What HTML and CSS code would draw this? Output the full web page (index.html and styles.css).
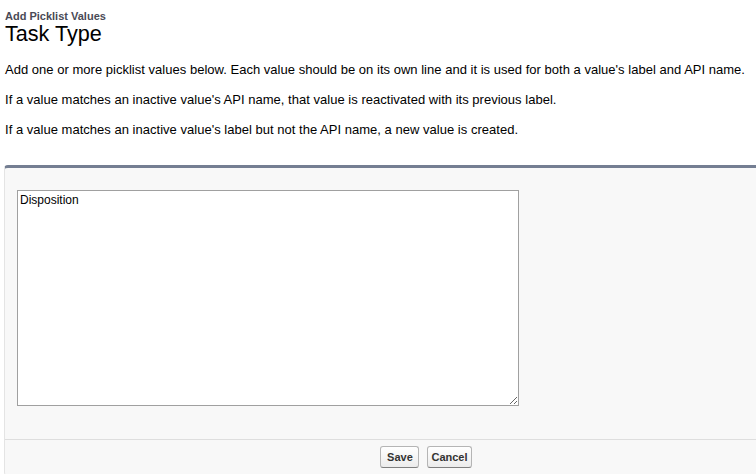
FILE: index.html
```html
<!DOCTYPE html>
<html>
<head>
<meta charset="utf-8">
<link rel="stylesheet" href="styles.css">
</head>
<body>
<div class="page">
  <div class="header">
    <div class="eyebrow">Add Picklist Values</div>
    <h1 class="title">Task Type</h1>
  </div>
  <div class="intro">
    <p>Add one or more picklist values below. Each value should be on its own line and it is used for both a value's label and API name.</p>
    <p>If a value matches an inactive value's API name, that value is reactivated with its previous label.</p>
    <p>If a value matches an inactive value's label but not the API name, a new value is created.</p>
  </div>
  <div class="panel-clip">
    <div class="panel">
      <div class="panel-body">
        <textarea class="values">Disposition</textarea>
      </div>
      <div class="panel-footer">
        <button class="btn">Save</button>
        <button class="btn">Cancel</button>
      </div>
    </div>
  </div>
</div>
</body>
</html>
```

FILE: styles.css
```css
html, body {
  margin: 0;
  padding: 0;
  overflow: hidden;
  background: #ffffff;
}
body {
  font-family: "Liberation Sans", Arial, sans-serif;
  color: #000;
}
.page {
  padding: 0 0 0 4px;
}
.header {
  padding: 10px 0 0 1px;
}
.eyebrow {
  font-size: 11px;
  font-weight: bold;
  color: #4a4a56;
  line-height: 13px;
}
.title {
  margin: 0;
  font-size: 21.6px;
  font-weight: normal;
  line-height: 22px;
  color: #000;
}
.intro {
  padding: 17px 0 0 1px;
}
.intro p {
  margin: 0 0 15px 0;
  font-size: 13px;
  line-height: 15px;
  letter-spacing: 0.02px;
}
.panel-clip {
  overflow: hidden;
  margin-top: 28px;
}
.panel {
  width: 842px;
  background: #f8f8f8;
  border-top: 3px solid #747e92;
  border-left: 1px solid #e4e4e4;
  border-radius: 4px 0 0 4px;
}
.panel-body {
  padding: 22px 0 0 12px;
  height: 272px;
  box-sizing: border-box;
  border-bottom: 1px solid #dedede;
}
.values {
  display: block;
  width: 502px;
  height: 216px;
  box-sizing: border-box;
  margin: 0;
  padding: 2px 2px;
  border: 1px solid #a0a0a0;
  font-family: "Liberation Sans", Arial, sans-serif;
  font-size: 12px;
  line-height: 14px;
  color: #000;
  background: #fff;
  resize: both;
}
.panel-footer {
  display: flex;
  justify-content: center;
  gap: 8px;
  padding: 6px 0 6px 0;
  height: 36px;
  box-sizing: border-box;
}
.btn {
  height: 22px;
  min-width: 39px;
  padding: 0 3px;
  font-family: "Liberation Sans", Arial, sans-serif;
  font-size: 11px;
  font-weight: bold;
  color: #333;
  background: linear-gradient(#ffffff, #ececec);
  border: 1px solid #b5b5b5;
  border-bottom-color: #7f7f7f;
  border-radius: 3px;
}
```
